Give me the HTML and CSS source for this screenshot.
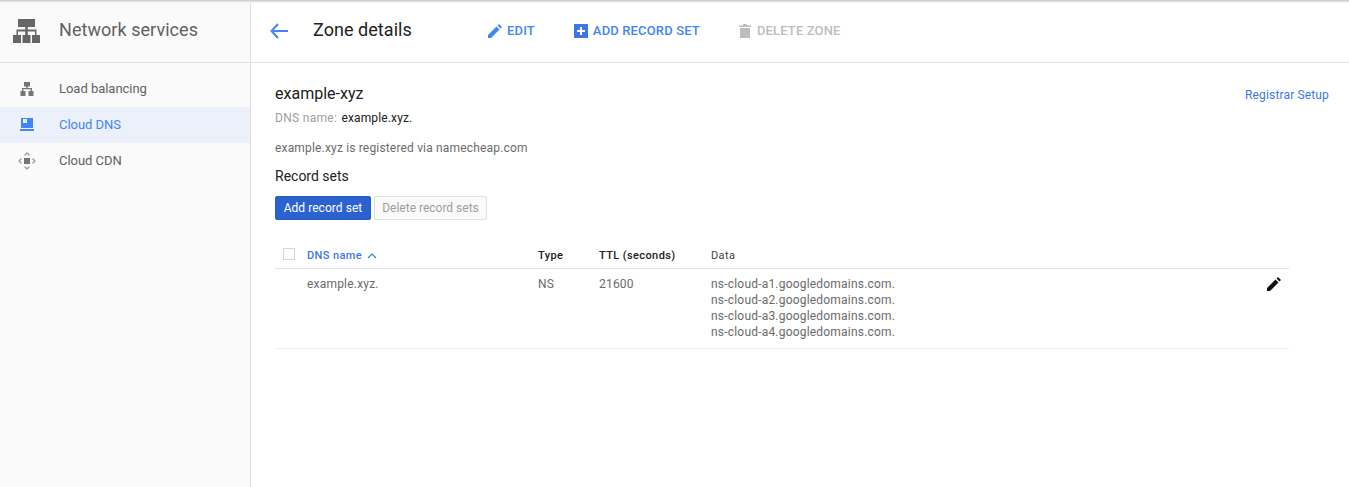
FILE: index.html
```html
<!DOCTYPE html>
<html lang="en">
<head>
    <meta charset="UTF-8">
    <title>Zone details - Network services</title>
    <link rel="stylesheet" href="styles.css">
</head>
<body>
    <div class="top-shadow"></div>
    <div class="app">
        <nav class="sidebar">
            <div class="sidebar-header">
                <svg class="product-icon" viewBox="0 0 27 24" width="27" height="24">
                    <path d="M5 0h17v8h-7.200v2.500H23.500V16H22v-3.500H14.800V16h-2.600v-3.500H5V16H3.500v-5.500h8.700V8H5z" fill="#666"/>
                    <path d="M0 16h8v8H0zM9.500 16h8v8h-8zM19 16h8v8h-8z" fill="#666"/>
                </svg>
                <span class="product-name">Network services</span>
            </div>
            <ul class="nav-list">
                <li class="nav-item">
                    <svg viewBox="0 0 16 16" width="16" height="16">
                        <path d="M5 1h6v4.500H8.700V7H13v3h1.500v5h-5v-5h2.200V8.300H4.300V10h2.200v5h-5v-5H3V7h4.300V5.500H5z" fill="#757575"/>
                    </svg>
                    <span>Load balancing</span>
                </li>
                <li class="nav-item active">
                    <svg viewBox="0 0 16 16" width="16" height="16">
                        <path d="M2 1h12v10H2zM4 2v4h4V2zM1 12h14v2H1z" fill="#4285f4" fill-rule="evenodd"/>
                    </svg>
                    <span>Cloud DNS</span>
                </li>
                <li class="nav-item">
                    <svg viewBox="0 0 18 18" width="18" height="18">
                        <path d="M6 6h6v6H6z" fill="#757575"/>
                        <path d="M6.500 3.500L9 1l2.500 2.500M6.500 14.500L9 17l2.500-2.500M3.500 6.500L1 9l2.500 2.500M14.500 6.500L17 9l-2.500 2.500" fill="none" stroke="#9e9e9e" stroke-width="1.300"/>
                    </svg>
                    <span>Cloud CDN</span>
                </li>
            </ul>
        </nav>

        <main class="main">
            <header class="page-header">
                <svg class="back-arrow" viewBox="0 0 18 16" width="18" height="16">
                    <path d="M8 1L1.500 8 8 15M2 8h16" fill="none" stroke="#4285f4" stroke-width="2"/>
                </svg>
                <h1 class="page-title">Zone details</h1>
                <div class="actions">
                    <a class="action edit">
                        <svg viewBox="0 0 14 14" width="14" height="14">
                            <path d="M0 14v-3L8.500 2.500l3 3L3 14zM9.500 1.500L11 0l3 3-1.500 1.500z" fill="#4285f4"/>
                        </svg>
                        EDIT
                    </a>
                    <a class="action add">
                        <svg viewBox="0 0 14 14" width="14" height="14">
                            <path d="M0 0h14v14H0zM6 3v3H3v2h3v3h2V8h3V6H8V3z" fill="#3b78e7" fill-rule="evenodd"/>
                        </svg>
                        ADD RECORD SET
                    </a>
                    <a class="action disabled">
                        <svg viewBox="0 0 12 14" width="12" height="14">
                            <path d="M1 4h10v10H1zM0 1.500h3.500L4.500 0h3l1 1.500H12V3H0z" fill="#bdbdbd"/>
                        </svg>
                        DELETE ZONE
                    </a>
                </div>
            </header>

            <section class="content">
                <div class="zone-top">
                    <div>
                        <h2 class="zone-name">example-xyz</h2>
                        <p class="dns-line"><span class="dns-label">DNS name:</span> <span class="dns-value">example.xyz.</span></p>
                    </div>
                    <a class="registrar-link">Registrar Setup</a>
                </div>
                <p class="registered">example.xyz is registered via namecheap.com</p>
                <h3 class="section-title">Record sets</h3>
                <div class="buttons">
                    <button class="btn btn-primary">Add record set</button>
                    <button class="btn btn-disabled">Delete record sets</button>
                </div>

                <table class="records">
                    <thead>
                        <tr>
                            <th class="col-check"><span class="checkbox"></span></th>
                            <th class="col-name sorted">DNS name
                                <svg viewBox="0 0 10 6" width="10" height="6"><path d="M1 5l4-4 4 4" fill="none" stroke="#3b78e7" stroke-width="1.200"/></svg>
                            </th>
                            <th class="col-type">Type</th>
                            <th class="col-ttl">TTL (seconds)</th>
                            <th class="col-data">Data</th>
                            <th class="col-edit"></th>
                        </tr>
                    </thead>
                    <tbody>
                        <tr>
                            <td></td>
                            <td>example.xyz.</td>
                            <td>NS</td>
                            <td>21600</td>
                            <td>
                                ns-cloud-a1.googledomains.com.<br>
                                ns-cloud-a2.googledomains.com.<br>
                                ns-cloud-a3.googledomains.com.<br>
                                ns-cloud-a4.googledomains.com.
                            </td>
                            <td class="edit-cell">
                                <svg viewBox="0 0 14 14" width="14" height="14">
                                    <path d="M0 14v-3L8.500 2.500l3 3L3 14zM9.500 1.500L11 0l3 3-1.500 1.500z" fill="#111"/>
                                </svg>
                            </td>
                        </tr>
                    </tbody>
                </table>
            </section>
        </main>
    </div>
</body>
</html>
```

FILE: styles.css
```css
* {
    margin: 0;
    padding: 0;
    box-sizing: border-box;
}

html, body {
    height: 100%;
    overflow: hidden;
}

body {
    background: #fff;
    color: #6b6b6b;
    font-family: Roboto, sans-serif;
    font-size: 12px;
}

.top-shadow {
    position: absolute;
    top: 0;
    left: 0;
    right: 0;
    height: 3px;
    background: linear-gradient(#c4c4c4, #eeeeee 70%, rgba(255, 255, 255, 0));
}

.app {
    display: flex;
    height: 100%;
}

/* sidebar */
.sidebar {
    width: 251px;
    flex-shrink: 0;
    background: #fafafa;
    border-right: 1px solid #e0e0e0;
}

.sidebar-header {
    height: 63px;
    display: flex;
    align-items: center;
    padding-left: 13px;
    border-bottom: 1px solid #e0e0e0;
}

.product-name {
    margin-left: 19px;
    margin-bottom: 3px;
    font-size: 18px;
    letter-spacing: 0.05px;
    color: #616161;
}

.nav-list {
    list-style: none;
    padding-top: 8px;
}

.nav-item {
    height: 36px;
    display: flex;
    align-items: center;
    font-size: 13px;
    letter-spacing: -0.03px;
    color: #616161;
}

.nav-item span {
    margin-bottom: 2px;
}

.nav-item svg {
    width: 18px;
    margin-left: 18px;
    margin-right: 23px;
}

.nav-item.active {
    width: 250px;
    background: #ebf0fb;
    color: #4285f4;
}

/* header */
.main {
    flex: 1;
    min-width: 0;
}

.page-header {
    height: 63px;
    display: flex;
    align-items: center;
    padding-left: 19px;
    border-bottom: 1px solid #e0e0e0;
}

.page-title {
    margin-left: 25px;
    margin-bottom: 3px;
    width: 175px;
    font-size: 18px;
    font-weight: 400;
    letter-spacing: 0.05px;
    color: #212121;
}

.actions {
    display: flex;
    align-items: center;
    font-size: 13px;
    font-weight: 500;
    letter-spacing: 0.15px;
    color: #4285f4;
}

.action {
    display: flex;
    align-items: center;
    gap: 5px;
    margin-right: 39px;
    margin-bottom: 1px;
}

.action.disabled {
    gap: 6px;
    color: #bdbdbd;
}

/* content */
.content {
    padding: 21px 20px 0 24px;
}

.zone-top {
    display: flex;
    justify-content: space-between;
    align-items: flex-start;
}

.zone-name {
    font-size: 16px;
    font-weight: 400;
    line-height: 19px;
    color: #212121;
}

.dns-line {
    margin-top: 8px;
    line-height: 15px;
    letter-spacing: 0.3px;
}

.dns-label {
    color: #9e9e9e;
}

.dns-value {
    margin-left: 1px;
    letter-spacing: 0.13px;
    color: #212121;
}

.registrar-link {
    margin-top: 4px;
    color: #3b78e7;
    letter-spacing: 0.15px;
}

.registered {
    margin-top: 15px;
    line-height: 15px;
    letter-spacing: 0.17px;
}

.section-title {
    margin-top: 12px;
    font-size: 14px;
    font-weight: 400;
    line-height: 17px;
    color: #212121;
}

.buttons {
    display: flex;
    gap: 3px;
    margin-top: 11px;
}

.btn {
    height: 24px;
    font-family: Roboto, sans-serif;
    font-size: 12px;
    white-space: nowrap;
    border-radius: 2px;
}

.btn-primary {
    width: 96px;
    background: #2c62d0;
    border: 1px solid #2a5bc0;
    letter-spacing: 0.05px;
    color: #fff;
}

.btn-disabled {
    width: 113px;
    background: #fafafa;
    border: 1px solid #e0e0e0;
    color: #9e9e9e;
}

/* record table */
.records {
    width: 1014px;
    margin-top: 20px;
    border-collapse: collapse;
    table-layout: fixed;
    letter-spacing: 0.2px;
}

.records th {
    height: 28px;
    padding-top: 4px;
    text-align: left;
    font-size: 11px;
    font-weight: 500;
    color: #212121;
    letter-spacing: 0.4px;
    border-bottom: 1px solid #e0e0e0;
}

.records td {
    padding: 7px 0 8px;
    line-height: 16px;
    vertical-align: top;
    border-bottom: 1px solid #eeeeee;
}

.col-check { width: 32px; }
.col-name { width: 231px; }
.col-type { width: 61px; }
.col-ttl { width: 112px; }
.col-edit { width: 22px; }

.records th.sorted {
    color: #3b78e7;
}

.sorted svg {
    margin-left: 2px;
}

.records th.col-data {
    font-weight: 400;
    color: #424242;
}

.checkbox {
    display: block;
    width: 12px;
    height: 12px;
    margin-left: 8px;
    margin-top: -4px;
    border: 1px solid #d6d6d6;
}

.records td.edit-cell {
    padding-top: 8px;
}
```
